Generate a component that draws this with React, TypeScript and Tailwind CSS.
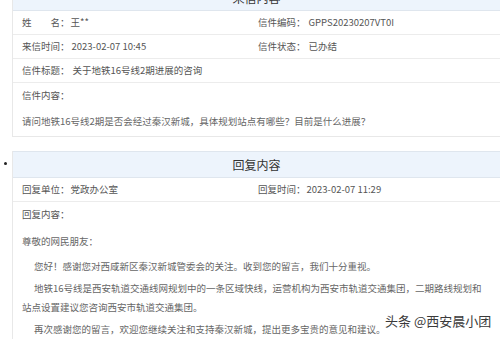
import React from "react";

const Row = ({
  left,
  right,
}: {
  left: React.ReactNode;
  right?: React.ReactNode;
}) => (
  <div className="h-[24px] border-b border-[#ececec] flex items-center whitespace-nowrap">
    <div className="w-[238px] pl-[9px] flex items-center">{left}</div>
    {right && <div className="pl-[7px] flex items-center">{right}</div>}
  </div>
);

const KV = ({ k, v, gap = "ml-[1px]" }: { k: string; v?: string; gap?: string }) => (
  <>
    <span>{k}</span>
    {v && <span className={gap}>{v}</span>}
  </>
);

export default function App() {
  return (
    <div className="w-[500px] h-[339px] overflow-hidden bg-white relative font-['Noto_Sans_CJK_SC','Microsoft_YaHei',sans-serif] text-[9.5px] text-[#555]">
      {/* Panel 1 */}
      <div className="-mt-[15px] ml-[12px] border-l border-b border-[#e8e8e8]">
        <div className="h-[26px] bg-[#edf4fc] border-b border-[#dfe6ee] flex items-center justify-center text-[12px] text-[#333]">
          来信内容
        </div>
        <Row
          left={<KV k="姓　　名：" v="王**" />}
          right={<KV k="信件编码：" v="GPPS20230207VT0I" gap="ml-[3px]" />}
        />
        <Row
          left={<KV k="来信时间：" v="2023-02-07 10:45" gap="ml-[2px]" />}
          right={<KV k="信件状态：" v="已办结" gap="ml-[3px]" />}
        />
        <Row left={<KV k="信件标题：" v="关于地铁16号线2期进展的咨询" gap="ml-[3px]" />} />
        <div className="h-[24px] flex items-center pl-[9px]">信件内容：</div>
        <div className="pt-[5px] pb-[5px] pl-[9px] leading-[19px] text-[#666] whitespace-nowrap">
          请问地铁16号线2期是否会经过秦汉新城，具体规划站点有哪些？目前是什么进展？
        </div>
      </div>

      {/* Panel 2 */}
      <div className="flex mt-[14px]">
        <div className="w-[12px] shrink-0 pl-[4px] pt-[11px]">
          <div className="w-[3px] h-[3px] rounded-full bg-[#222]" />
        </div>
        <div className="flex-1 border-l border-[#e8e8e8]">
          <div className="h-[27px] bg-[#edf4fc] border-t border-b border-[#dfe6ee] flex items-center justify-center text-[12px] text-[#333]">
            回复内容
          </div>
          <Row
            left={<KV k="回复单位：" v="党政办公室" gap="ml-[1px]" />}
            right={<KV k="回复时间：" v="2023-02-07 11:29" gap="ml-[1px]" />}
          />
          <div className="h-[24px] flex items-center pl-[9px]">回复内容：</div>
          <div className="pt-[6px] pl-[9px] leading-[19px] text-[#666] whitespace-nowrap">
            <p>尊敬的网民朋友：</p>
            <p className="mt-[6px] indent-[12px]">
              您好！感谢您对西咸新区秦汉新城管委会的关注。收到您的留言，我们十分重视。
            </p>
            <p className="mt-[3px] indent-[12px]">
              地铁16号线是西安轨道交通线网规划中的一条区域快线，运营机构为西安市轨道交通集团，二期路线规划和
              <br />
              站点设置建议您咨询西安市轨道交通集团。
            </p>
            <p className="mt-[3px] indent-[12px]">
              再次感谢您的留言，欢迎您继续关注和支持秦汉新城，提出更多宝贵的意见和建议。
            </p>
          </div>
        </div>
      </div>

      {/* Watermark */}
      <div className="absolute left-[385px] top-[313px] text-[13px] leading-[16px] text-[#3a3a3a] whitespace-nowrap [text-shadow:0_0_2px_#fff,0_0_2px_#fff,0_0_3px_#fff]">
        头条 @西安晨小团
      </div>
    </div>
  );
}
